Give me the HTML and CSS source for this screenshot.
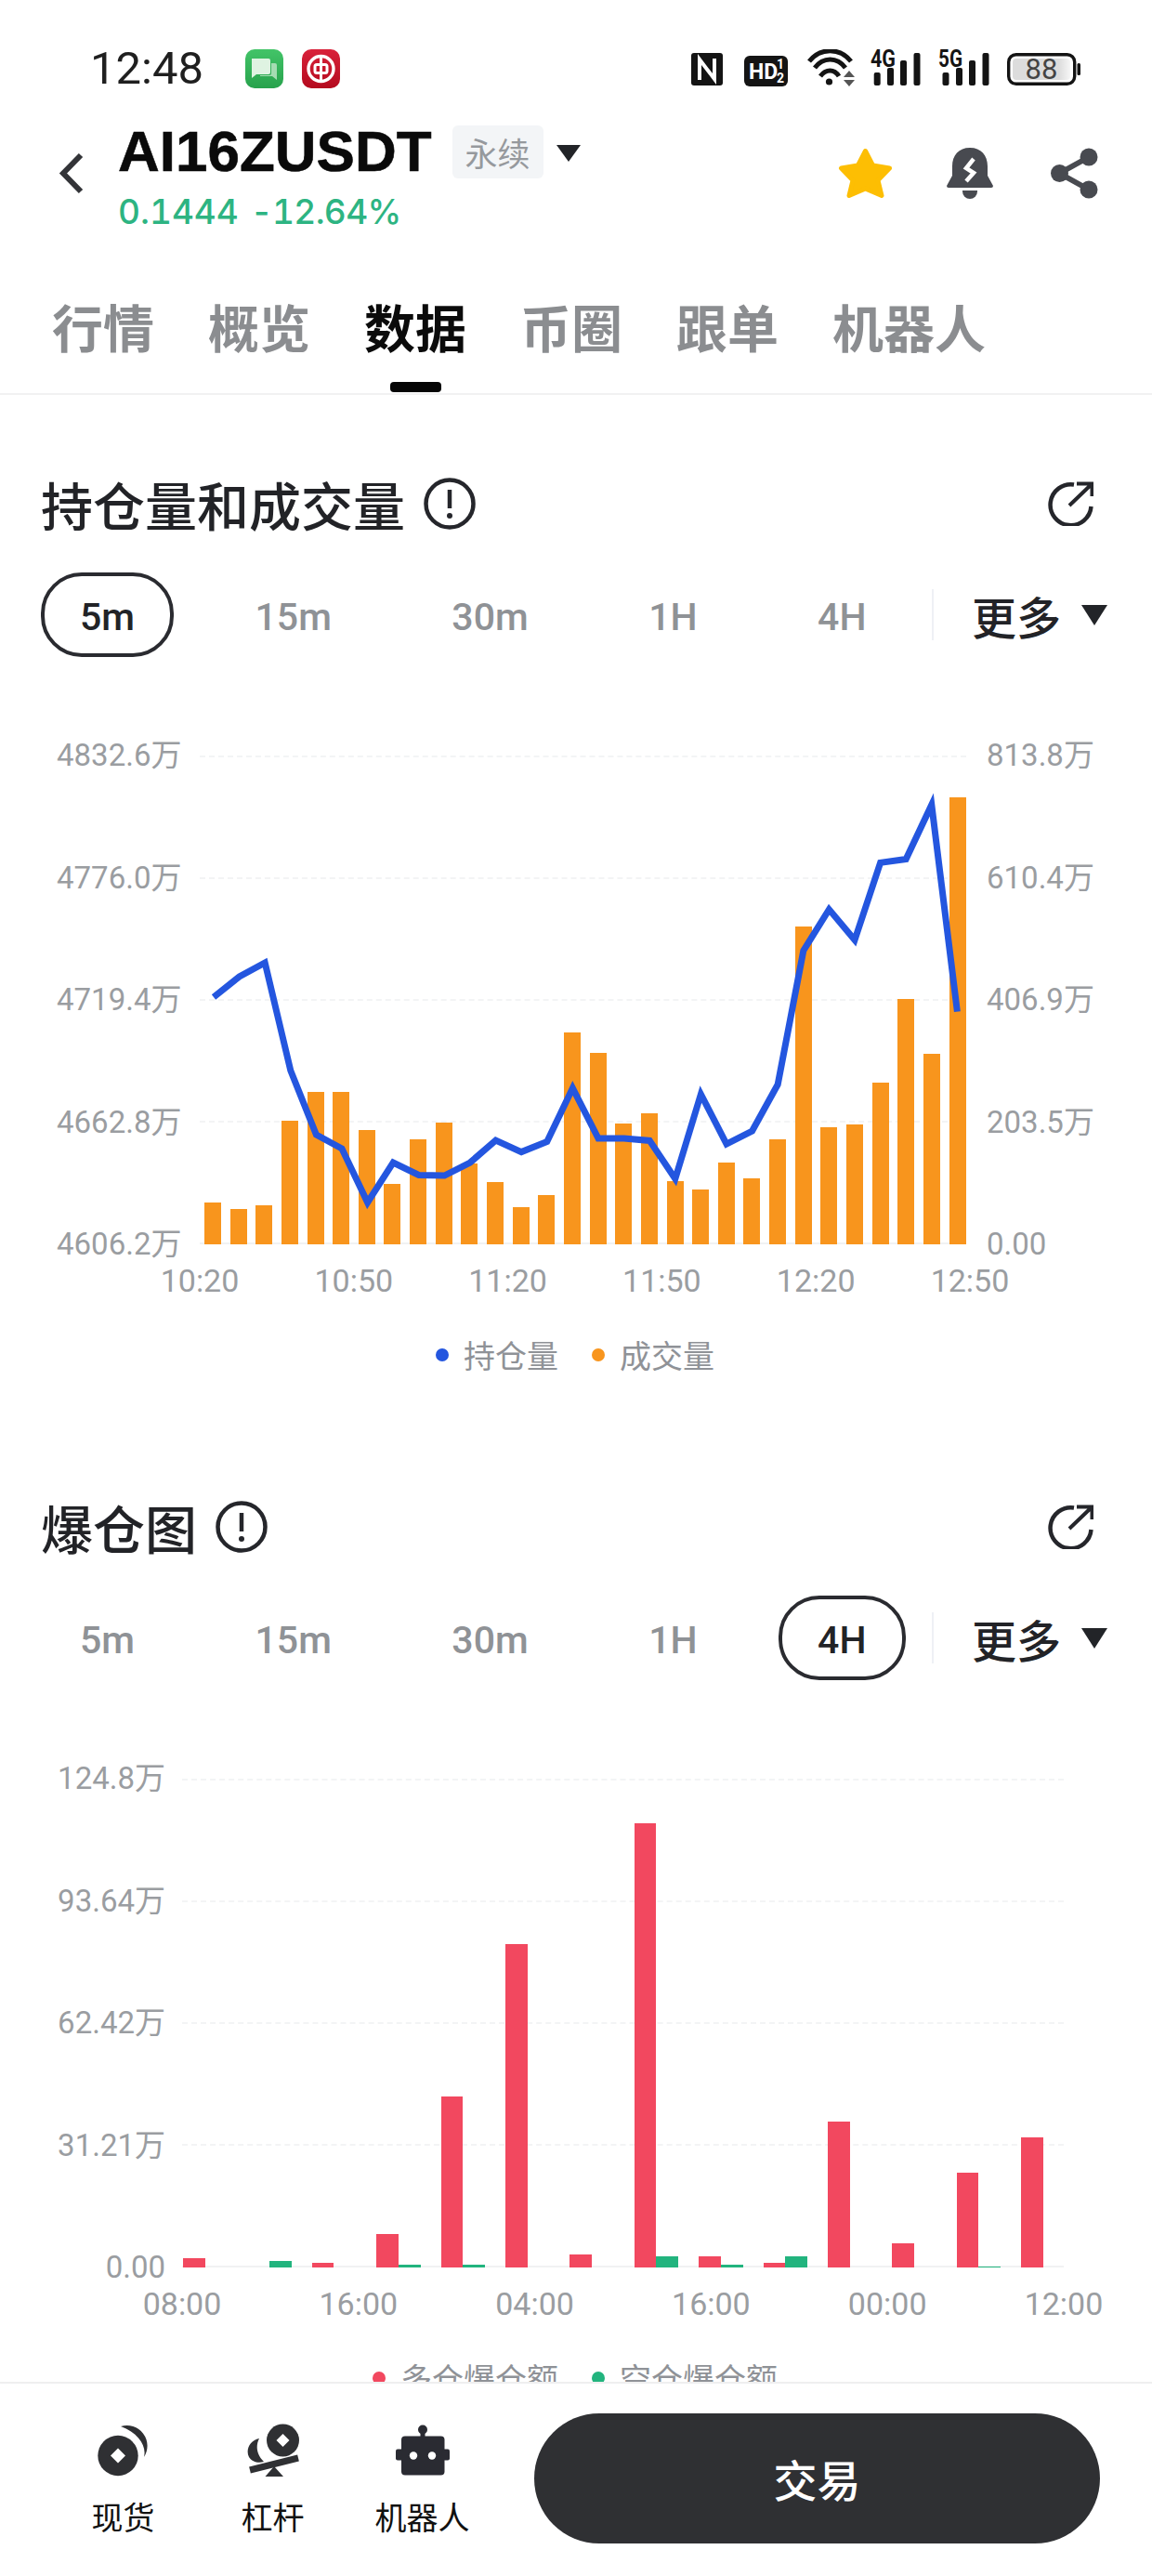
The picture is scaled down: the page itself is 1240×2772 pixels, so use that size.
FILE: index.html
```html
<!DOCTYPE html>
<html lang="zh">
<head>
<meta charset="utf-8">
<title>AI16ZUSDT</title>
<link rel="stylesheet" href="styles.css">
</head>
<body>
<div class="page">
  <div class="scroll">
    <div class="status">
      <div class="status-left">
        <span class="time">12:48</span>
        <div class="notif">
          <svg width="41" height="42" viewBox="0 0 41 42"><defs><linearGradient id="gm" x1="0" y1="0" x2="0" y2="1"><stop offset="0" stop-color="#43c468"/><stop offset="1" stop-color="#27a24c"/></linearGradient></defs><rect width="41" height="42" rx="10" fill="url(#gm)"/><path d="M7 10h18a2 2 0 0 1 2 2v13a2 2 0 0 1-2 2H12l-5 4z" fill="#dff3e2"/><path d="M28 15h4a2 2 0 0 1 2 2v11l0 5-5-4H16v-1h10a2 2 0 0 0 2-2z" fill="#a5dcb2"/></svg>
          <svg width="41" height="42" viewBox="0 0 41 42"><defs><linearGradient id="gr" x1="0" y1="0" x2="0" y2="1"><stop offset="0" stop-color="#d9223a"/><stop offset="1" stop-color="#b40a1e"/></linearGradient></defs><rect width="41" height="42" rx="10" fill="url(#gr)"/><circle cx="20.5" cy="21" r="13.5" fill="none" stroke="#fff" stroke-width="3.4"/><rect x="14" y="16.5" width="13" height="9" rx="2" fill="none" stroke="#fff" stroke-width="3"/><path d="M20.5 7v28" stroke="#fff" stroke-width="3"/></svg>
        </div>
      </div>
      <div class="status-right">
        <svg class="si" width="34" height="35" viewBox="0 0 34 35"><rect width="34" height="35" rx="3" fill="#141414"/><path d="M9 29V7l16 21V6" fill="none" stroke="#fff" stroke-width="4"/></svg>
        <svg class="si" width="47" height="33" viewBox="0 0 47 33"><rect width="47" height="33" rx="6" fill="#141414"/><text x="5" y="25" class="hd">HD</text><text x="35" y="14" class="hd-s">1</text><text x="35" y="29" class="hd-s">2</text></svg>
        <svg class="si" width="52" height="40" viewBox="0 0 52 40"><g fill="none" stroke="#141414" stroke-width="5"><path d="M2 13C14 -2 35 -2 47 13"/><path d="M8 20C17 8 32 8 41 20"/><path d="M14 29C20 21 29 21 34 29"/></g><circle cx="23.5" cy="35" r="3.6" fill="#141414"/><path d="M45 23l6 7H39zM39 33h12l-6 7z" fill="#555"/></svg>
        <svg class="si sg" width="54" height="46" viewBox="0 -8 54 46"><text x="0" y="18" class="net" textLength="27" lengthAdjust="spacingAndGlyphs">4G</text><g fill="#141414"><rect x="3.7" y="24" width="7" height="14" rx="2"/><rect x="18" y="19" width="7" height="19" rx="2"/><rect x="32" y="11" width="7" height="27" rx="2"/><rect x="46.5" y="3" width="7" height="35" rx="2"/></g></svg>
        <svg class="si sg" width="55" height="46" viewBox="0 -8 55 46"><text x="0" y="18" class="net" textLength="26" lengthAdjust="spacingAndGlyphs">5G</text><g fill="#141414"><rect x="4.5" y="24" width="7" height="14" rx="2"/><rect x="19" y="19" width="7" height="19" rx="2"/><rect x="33" y="11" width="7" height="27" rx="2"/><rect x="47.5" y="3" width="7" height="35" rx="2"/></g></svg>
        <svg class="si" width="79" height="35" viewBox="0 0 79 35"><defs><linearGradient id="bt" x1="0" y1="0" x2="1" y2="0"><stop offset="0" stop-color="#dcdcdc"/><stop offset=".8" stop-color="#dcdcdc"/><stop offset="1" stop-color="#f6f6f6"/></linearGradient></defs><rect x="1.7" y="1.7" width="71" height="31.6" rx="8" fill="#fff" stroke="#141414" stroke-width="3.4"/><rect x="6" y="6" width="62" height="23" rx="4" fill="url(#bt)"/><text x="37" y="28" class="batt" text-anchor="middle">88</text><rect x="75.5" y="11" width="3.5" height="13" rx="1.5" fill="#141414"/></svg>
      </div>
    </div>

    <header class="head">
      <svg class="back" width="27" height="45" viewBox="0 0 27 45"><path d="M24 3L5 22.5 24 42" fill="none" stroke="#333438" stroke-width="6"/></svg>
      <div class="pair">
        <div class="pair-top">
          <h1 class="sym">AI16ZUSDT</h1>
          <span class="badge">永续</span>
          <span class="tri tri-h"></span>
        </div>
        <div class="price"><span>0.1444</span><span class="chg">-12.64%</span></div>
      </div>
      <div class="acts">
        <svg width="59" height="55" viewBox="0 0 59 55"><path d="M29.5 3.5L37.5 19 55.500 22 43 35 47 51.500 29.500 44 12 51.500 16 35 3.500 22 21.500 19Z" fill="#fdbe03" stroke="#fdbe03" stroke-width="5" stroke-linejoin="round"/></svg>
        <svg class="act-bell" width="50" height="55" viewBox="0 0 50 55"><path d="M25 0C13 0 6 8 6 20V30L0 41Q0 43 2 43H48Q50 43 50 41L44 30V20C44 8 37 0 25 0Z" fill="#484a50"/><path d="M17 46H33V47A8 8 0 0 1 17 47Z" fill="#484a50"/><path d="M29 12L21 22 29 27 21 36" fill="none" stroke="#fff" stroke-width="4.500"/></svg>
        <svg class="act-share" width="51" height="55" viewBox="0 0 51 55"><g fill="#484a50"><circle cx="41" cy="10" r="9.500"/><circle cx="9.500" cy="27.500" r="9.500"/><circle cx="41" cy="45" r="9.500"/></g><path d="M41 10L9.500 27.500 41 45" fill="none" stroke="#484a50" stroke-width="6"/></svg>
      </div>
    </header>

    <nav class="tabs">
      <span class="tab">行情</span>
      <span class="tab">概览</span>
      <span class="tab tab-on">数据<i class="tab-bar"></i></span>
      <span class="tab">币圈</span>
      <span class="tab">跟单</span>
      <span class="tab">机器人</span>
    </nav>

    <section class="sec sec-a">
      <div class="sec-head">
        <h2 class="sec-title">持仓量和成交量</h2>
        <svg class="info" width="56" height="56" viewBox="0 0 56 56"><circle cx="28" cy="28" r="25.500" fill="none" stroke="#25262b" stroke-width="4.500"/><path d="M28 13v20" stroke="#25262b" stroke-width="4.500"/><circle cx="28" cy="41" r="3" fill="#25262b"/></svg>
        <svg class="ext" width="49" height="48" viewBox="0 0 49 48"><path d="M28 3.500A22 22 0 1 0 46.500 27" fill="none" stroke="#25262b" stroke-width="4.500"/><path d="M23 26L47 3M31 2.500H47.500V16" fill="none" stroke="#25262b" stroke-width="4"/></svg>
      </div>
      <div class="tf">
        <div class="tf-list">
          <span class="tf-i tf-on">5m</span><span class="tf-i">15m</span><span class="tf-i">30m</span><span class="tf-i">1H</span><span class="tf-i">4H</span>
        </div>
        <i class="tf-div"></i>
        <span class="tf-more">更多</span>
        <span class="tri tri-m"></span>
      </div>
      <div class="chart chart-a">
        <div class="axis axis-l">
          <span>4832.6万</span><span>4776.0万</span><span>4719.4万</span><span>4662.8万</span><span>4606.2万</span>
        </div>
        <div class="plot">
          <div class="grid"><i></i><i></i><i></i><i></i><i class="base"></i></div>
          <div class="bars bars-a">
            <i style="height:45px"></i><i style="height:38px"></i><i style="height:42px"></i><i style="height:133px"></i><i style="height:164px"></i><i style="height:164px"></i><i style="height:123px"></i><i style="height:65px"></i><i style="height:113px"></i><i style="height:131px"></i><i style="height:87px"></i><i style="height:67px"></i><i style="height:40px"></i><i style="height:53px"></i><i style="height:228px"></i><i style="height:206px"></i><i style="height:130px"></i><i style="height:141px"></i><i style="height:68px"></i><i style="height:59px"></i><i style="height:88px"></i><i style="height:71px"></i><i style="height:113px"></i><i style="height:342px"></i><i style="height:126px"></i><i style="height:129px"></i><i style="height:174px"></i><i style="height:264px"></i><i style="height:205px"></i><i style="height:481px"></i>
          </div>
          <svg class="line" viewBox="0 0 825 526" width="825" height="526"><polyline fill="none" stroke="#2456df" stroke-width="7" stroke-linejoin="miter" stroke-miterlimit="4" points="15,260 42.600,238 70.200,223 97.800,339 125.400,408 153,423 180.600,481 208.200,438 235.800,451.500 263.400,452 291,438 318.600,414 346.200,426.600 373.800,415.500 401.400,358 429,412 456.600,412 484.200,414.400 511.800,455.500 539.400,364.500 567,418 594.600,404 622.200,354 649.800,210 677.400,165.600 705,198.500 732.600,115.400 760.200,111.500 787.800,53 815.400,275.600"/></svg>
        </div>
        <div class="axis axis-r">
          <span>813.8万</span><span>610.4万</span><span>406.9万</span><span>203.5万</span><span>0.00</span>
        </div>
      </div>
      <div class="xaxis xaxis-a"><span>10:20</span><span>10:50</span><span>11:20</span><span>11:50</span><span>12:20</span><span>12:50</span></div>
      <div class="legend"><span class="lg"><i class="dot d-blue"></i>持仓量</span><span class="lg"><i class="dot d-orange"></i>成交量</span></div>
    </section>

    <section class="sec sec-b">
      <div class="sec-head">
        <h2 class="sec-title">爆仓图</h2>
        <svg class="info" width="56" height="56" viewBox="0 0 56 56"><circle cx="28" cy="28" r="25.500" fill="none" stroke="#25262b" stroke-width="4.500"/><path d="M28 13v20" stroke="#25262b" stroke-width="4.500"/><circle cx="28" cy="41" r="3" fill="#25262b"/></svg>
        <svg class="ext" width="49" height="48" viewBox="0 0 49 48"><path d="M28 3.500A22 22 0 1 0 46.500 27" fill="none" stroke="#25262b" stroke-width="4.500"/><path d="M23 26L47 3M31 2.500H47.500V16" fill="none" stroke="#25262b" stroke-width="4"/></svg>
      </div>
      <div class="tf">
        <div class="tf-list">
          <span class="tf-i">5m</span><span class="tf-i">15m</span><span class="tf-i">30m</span><span class="tf-i">1H</span><span class="tf-i tf-on">4H</span>
        </div>
        <i class="tf-div"></i>
        <span class="tf-more">更多</span>
        <span class="tri tri-m"></span>
      </div>
      <div class="chart chart-b">
        <div class="axis axis-l">
          <span>124.8万</span><span>93.64万</span><span>62.42万</span><span>31.21万</span><span>0.00</span>
        </div>
        <div class="plot">
          <div class="grid"><i></i><i></i><i></i><i></i><i class="base"></i></div>
          <div class="bars bars-b">
            <div class="grp"><i class="r" style="height:10px"></i></div>
            <div class="grp"><i class="r" style="height:0"></i><i class="g" style="height:7px"></i></div>
            <div class="grp"><i class="r" style="height:5px"></i></div>
            <div class="grp"><i class="r" style="height:36px"></i><i class="g" style="height:3px"></i></div>
            <div class="grp"><i class="r" style="height:184px"></i><i class="g" style="height:3px"></i></div>
            <div class="grp"><i class="r" style="height:348px"></i></div>
            <div class="grp"><i class="r" style="height:14px"></i></div>
            <div class="grp"><i class="r" style="height:478px"></i><i class="g" style="height:12px"></i></div>
            <div class="grp"><i class="r" style="height:12px"></i><i class="g" style="height:3px"></i></div>
            <div class="grp"><i class="r" style="height:5px"></i><i class="g" style="height:12px"></i></div>
            <div class="grp"><i class="r" style="height:157px"></i></div>
            <div class="grp"><i class="r" style="height:26px"></i></div>
            <div class="grp"><i class="r" style="height:102px"></i><i class="g" style="height:1px"></i></div>
            <div class="grp"><i class="r" style="height:140px"></i></div>
          </div>
        </div>
      </div>
      <div class="xaxis xaxis-b"><span>08:00</span><span>16:00</span><span>04:00</span><span>16:00</span><span>00:00</span><span>12:00</span></div>
      <div class="legend"><span class="lg"><i class="dot d-red"></i>多仓爆仓额</span><span class="lg"><i class="dot d-green"></i>空仓爆仓额</span></div>
    </section>
  </div>

  <footer class="foot">
    <div class="tools">
      <div class="tool">
        <svg class="tool-ic" width="56" height="57" viewBox="0 0 56 57"><path d="M25 3A22 22 0 0 1 50 36C53 24 44 10 25 3Z" fill="#2f3033"/><ellipse cx="22" cy="34.500" rx="21.700" ry="21.700" fill="#2f3033"/><path d="M22 26.500l8 8-8 8-8-8z" fill="#fff"/></svg>
        <span class="tool-t">现货</span>
      </div>
      <div class="tool">
        <svg class="tool-ic" width="56" height="57" viewBox="0 0 56 57"><circle cx="38.500" cy="18" r="17.500" fill="#2f3033"/><path d="M38.500 11l7 7-7 7-7-7z" fill="#fff"/><path d="M13 16C3 18-2 28 2 36 5 41 12 43 18 41 10 33 9 24 13 16Z" fill="#2f3033"/><path d="M3 50L55 37" stroke="#2f3033" stroke-width="7"/><path d="M29 46L39 57H19.500Z" fill="#2f3033"/></svg>
        <span class="tool-t">杠杆</span>
      </div>
      <div class="tool">
        <svg class="tool-ic" width="58" height="57" viewBox="0 0 58 54"><circle cx="29" cy="5" r="5" fill="#2a2b32"/><rect x="26.500" y="6" width="5" height="8" fill="#2a2b32"/><rect x="6" y="12" width="46.500" height="42" rx="4" fill="#2a2b32"/><rect y="26" width="8" height="12" rx="2" fill="#2a2b32"/><rect x="50" y="26" width="8" height="12" rx="2" fill="#2a2b32"/><circle cx="19" cy="33" r="4.200" fill="#fff"/><circle cx="39" cy="33" r="4.200" fill="#fff"/></svg>
        <span class="tool-t">机器人</span>
      </div>
    </div>
    <button class="trade">交易</button>
  </footer>
</div>
</body>
</html>
```

FILE: styles.css
```css
* { box-sizing: border-box; }
html, body { margin: 0; padding: 0; background: #fff; }
body { font-family: Roboto, "Noto Sans CJK SC", sans-serif; color: #222; }
i { font-style: normal; }
.page { width: 1240px; height: 2772px; display: flex; flex-direction: column; overflow: hidden; }
.scroll { flex: 1; min-height: 0; overflow: hidden; }

/* status bar */
.status { height: 128px; padding: 53px 77px 0 97px; display: flex; justify-content: space-between; align-items: flex-start; }
.status-left { display: flex; align-items: center; gap: 45px; height: 42px; }
.time { font-size: 49px; line-height: 42px; color: #1f1f1f; }
.notif { display: flex; gap: 20px; }
.status-right { display: flex; align-items: flex-start; gap: 19px; height: 40px; }
.si { display: block; flex: none; }
.status-right .si:nth-child(1) { margin-top: 4px; }
.status-right .si:nth-child(2) { margin-top: 7px; margin-left: 4px; }
.status-right .si:nth-child(3) { margin-left: 2px; }
.status-right .si:nth-child(4) { margin-left: -3px; }
.status-right .si:nth-child(6) { margin-top: 4px; }
.sg { margin-top: -7px; }
.hd { font: 700 23px Roboto, sans-serif; fill: #fff; }
.hd-s { font: 700 14px Roboto, sans-serif; fill: #fff; }
.net { font: 700 25px Roboto, sans-serif; fill: #141414; }
.batt { font: 400 31px Roboto, sans-serif; fill: #444; }

/* header */
.head { height: 121px; padding: 5px 58px 0 63px; display: flex; align-items: flex-start; }
.back { margin-top: 31px; flex: none; }
.pair { margin-left: 37px; flex: 1; }
.pair-top { display: flex; align-items: flex-start; height: 60px; }
.sym { margin: 0; font: 700 62px/60px "Liberation Sans", sans-serif; color: #0a0a0a; -webkit-text-stroke: .6px #0a0a0a; }
.badge { margin-left: 22px; margin-top: 2px; width: 98px; height: 57px; background: #f3f5f7; border-radius: 6px; font: 400 35px/57px "Noto Sans CJK SC", sans-serif; color: #96999d; text-align: center; }
.tri { display: block; flex: none; width: 0; height: 0; border-style: solid; border-color: #222428 transparent transparent; }
.tri-h { margin: 23px 0 0 14px; border-width: 18px 13px 0; }
.price { margin-top: 14px; display: flex; gap: 13px; font: 500 37px/42px Inter, sans-serif; font-variant-numeric: tabular-nums; color: #2db482; }
.chg { letter-spacing: -.7px; }
.acts { display: flex; margin-top: 26px; align-items: flex-start; }
.act-bell { margin-left: 58px; }
.act-share { margin-left: 62px; }

/* tabs */
.tabs { padding: 73px 0 0 56px; display: flex; gap: 58px; align-items: flex-start; border-bottom: 2px solid #f1f1f2; height: 176px; }
.tab { display: flex; flex-direction: column; align-items: center; font: 700 55px/56px "Noto Sans CJK SC", sans-serif; color: #8b8d90; }
.tab-on { color: #0b0b0b; }
.tab-bar { display: block; width: 55px; height: 11px; margin-top: 33px; background: #050505; border-radius: 4px; }

/* sections */
.sec-a { padding-top: 87px; }
.sec-b { padding-top: 135px; }
.sec-head { height: 60px; padding: 0 63px 0 44px; display: flex; align-items: center; }
.sec-title { margin: 0; font: 500 56px/60px "Noto Sans CJK SC", sans-serif; color: #222327; }
.info { margin-left: 20px; flex: none; }
.ext { margin-left: auto; flex: none; }

.tf { margin-top: 44px; height: 91px; padding: 0 48px 0 44px; display: flex; align-items: center; }
.tf-list { flex: 1; display: flex; gap: 45.500px; height: 91px; }
.tf-i { height: 91px; padding: 0 38px; border: 4px solid transparent; border-radius: 44px; font: 500 41px/88px Roboto, sans-serif; color: #8f9296; }
.tf-on { border-color: #2a2b30; color: #222327; }
.tf-div { width: 2px; height: 55px; background: #eef0f5; margin-right: 41px; }
.tf-more { font: 500 48px/60px "Noto Sans CJK SC", sans-serif; color: #222327; }
.tri-m { margin-left: 22px; border-width: 22px 14px 0; }

/* charts */
.chart { margin-top: 106px; height: 526px; display: flex; }
.axis { display: flex; flex-direction: column; justify-content: space-between; height: 526px; flex: none; font-size: 33px; color: #9a9da1; }
.axis span { height: 0; line-height: 0; white-space: nowrap; }
.axis-l { text-align: right; }
.chart-a { padding-left: 61px; }
.chart-a .axis-l { width: 154px; padding-right: 20px; }
.chart-b { padding-left: 62px; }
.chart-b .axis-l { width: 134px; padding-right: 18px; }
.axis-r { padding-left: 22px; }
.plot { position: relative; height: 526px; flex: none; }
.chart-a .plot { width: 825px; }
.chart-b .plot { width: 949px; }
.grid { height: 526px; display: flex; flex-direction: column; justify-content: space-between; }
.grid i { display: block; height: 0; border-top: 2px dashed #f3f4f5; }
.grid .base { border-top: 2px solid #f1f2f3; }
.bars { position: absolute; left: 0; right: 0; bottom: 0; height: 526px; display: flex; align-items: flex-end; }
.bars-a { padding-left: 5px; gap: 9.650px; }
.bars-a i { display: block; width: 18px; background: #f8951d; flex: none; }
.bars-b { padding-left: 1px; gap: 22px; }
.grp { display: flex; align-items: flex-end; width: 47.400px; flex: none; height: 100%; }
.grp i { display: block; width: 23.700px; flex: none; }
.r { background: #f2485f; }
.g { background: #22b47e; }
.line { position: absolute; left: 0; top: 0; display: block; }

.xaxis { height: 40px; margin-top: 19px; display: flex; justify-content: space-between; font-size: 34px; line-height: 40px; color: #9a9da1; }
.xaxis span { width: 0; display: flex; justify-content: center; white-space: nowrap; }
.xaxis-a { margin-left: 215px; width: 829px; }
.xaxis-b { margin-left: 196px; width: 949px; }
.legend { height: 40px; margin-top: 40px; padding-right: 2px; display: flex; justify-content: center; gap: 36px; font: 400 34px/40px "Noto Sans CJK SC", sans-serif; color: #8f9297; }
.lg { display: flex; align-items: center; gap: 16px; }
.dot { display: block; width: 14px; height: 14px; border-radius: 50%; }
.d-blue { background: #2456df; }
.d-orange { background: #f8951d; }
.d-red { background: #f2485f; }
.d-green { background: #22b47e; }

/* footer */
.foot { height: 209px; flex: none; background: #fff; border-top: 2px solid #efeff0; padding: 32px 56px 0 52px; display: flex; align-items: flex-start; position: relative; }
.tools { display: flex; width: 523px; flex: none; }
.tool { width: 161px; display: flex; flex-direction: column; align-items: center; padding-top: 11px; }
.tool-ic { display: block; }
.tool-t { margin-top: 23px; font: 400 34px/40px "Noto Sans CJK SC", sans-serif; color: #111; }
.trade { width: 609px; height: 140px; border: 0; border-radius: 70px; background: #2f3033; color: #fff; font: 500 47px/140px "Noto Sans CJK SC", sans-serif; padding: 0; }
```
